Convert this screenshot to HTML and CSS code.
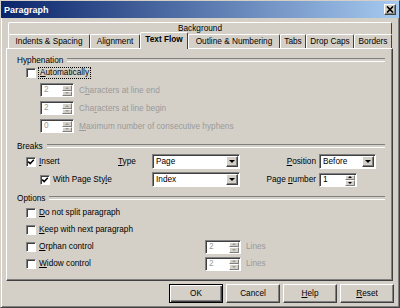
FILE: index.html
```html
<!DOCTYPE html>
<html lang="en">
<head>
<meta charset="UTF-8" />
<meta name="viewport" content="width=device-width,initial-scale=1.0" />
<title>Paragraph</title>
<link rel="stylesheet" href="styles.css">
</head>
<body>
<div class="window">
  <div class="titlebar">
    <span class="title">Paragraph</span>
    <span class="close"><svg width="8" height="7" viewBox="0 0 8 7"><path d="M1 0.5L7 6.5M7 0.5L1 6.5" stroke="#000" stroke-width="1.7"/></svg></span>
  </div>

  <div class="tabs-back"><div>Background</div></div>
  <div class="tabs">
    <div class="tab w-indents">Indents &amp; Spacing</div>
    <div class="tab w-align">Alignment</div>
    <div class="tab active w-flow">Text Flow</div>
    <div class="tab w-outline">Outline &amp; Numbering</div>
    <div class="tab w-tabs">Tabs</div>
    <div class="tab w-caps">Drop Caps</div>
    <div class="tab w-borders">Borders</div>
  </div>

  <div class="panel">
    <!-- Hyphenation -->
    <div class="group g-hyph"><span>Hyphenation</span></div>
    <div class="row chk-row">
      <span class="check"></span>
      <span class="focus"><u>A</u>utomatically</span>
    </div>
    <div class="row spin-row">
      <span class="spin off"><span class="val">2</span><span class="arrows"><i class="up"></i><i class="down"></i></span></span>
      <span class="dim">C<u>h</u>aracters at line end</span>
    </div>
    <div class="row spin-row">
      <span class="spin off"><span class="val">2</span><span class="arrows"><i class="up"></i><i class="down"></i></span></span>
      <span class="dim">Cha<u>r</u>acters at line begin</span>
    </div>
    <div class="row spin-row">
      <span class="spin off"><span class="val">0</span><span class="arrows"><i class="up"></i><i class="down"></i></span></span>
      <span class="dim"><u>M</u>aximum number of consecutive hyphens</span>
    </div>

    <!-- Breaks -->
    <div class="group g-breaks"><span>Breaks</span></div>
    <div class="row brk-row first">
      <span class="cell1"><span class="check on"><svg width="8" height="8" viewBox="0 0 8 8"><path d="M1.2 3.6L3.2 5.6L6.8 1.8" fill="none" stroke="#000" stroke-width="1.5"/></svg></span><span><u>I</u>nsert</span></span>
      <span class="cell-type"><u>T</u>ype</span>
      <span class="select wide"><span class="val">Page</span><span class="drop"><i></i></span></span>
      <span class="cell-r"><u>P</u>osition</span>
      <span class="select narrow"><span class="val">Before</span><span class="drop"><i></i></span></span>
    </div>
    <div class="row brk-row">
      <span class="cell1 indent"><span class="check on"><svg width="8" height="8" viewBox="0 0 8 8"><path d="M1.2 3.6L3.2 5.6L6.8 1.8" fill="none" stroke="#000" stroke-width="1.5"/></svg></span><span>With Page Sty<u>l</u>e</span></span>
      <span class="cell-type"></span>
      <span class="select wide"><span class="val">Index</span><span class="drop"><i></i></span></span>
      <span class="cell-r">Page <u>n</u>umber</span>
      <span class="spin num"><span class="val">1</span><span class="arrows"><i class="up"></i><i class="down"></i></span></span>
    </div>

    <!-- Options -->
    <div class="group g-opts"><span>Options</span></div>
    <div class="row opt-row">
      <span class="optcell"><span class="check"></span><span><u>D</u>o not split paragraph</span></span>
    </div>
    <div class="row opt-row">
      <span class="optcell"><span class="check"></span><span><u>K</u>eep with next paragraph</span></span>
    </div>
    <div class="row opt-row">
      <span class="optcell"><span class="check"></span><span><u>O</u>rphan control</span></span>
      <span class="spin off lines"><span class="val">2</span><span class="arrows"><i class="up"></i><i class="down"></i></span></span>
      <span class="dim">Lines</span>
    </div>
    <div class="row opt-row">
      <span class="optcell"><span class="check"></span><span><u>W</u>idow control</span></span>
      <span class="spin off lines"><span class="val">2</span><span class="arrows"><i class="up"></i><i class="down"></i></span></span>
      <span class="dim">Lines</span>
    </div>
  </div>

  <div class="buttons">
    <span class="btn default">OK</span>
    <span class="btn">Cancel</span>
    <span class="btn"><u>H</u>elp</span>
    <span class="btn"><u>R</u>eset</span>
  </div>
</div>
</body>
</html>
```

FILE: styles.css
```css
* { box-sizing: border-box; }
body { margin: 0; background: #d4d0c8; font-family: "Liberation Sans", Arial, sans-serif; font-size: 8.25px; color: #000; }
u { text-decoration-thickness: 1px; text-underline-offset: 1px; }

.window { width: 400px; height: 308px; border: 1px solid; border-color: #d4d0c8 #404040 #404040 #d4d0c8; box-shadow: inset 1px 1px 0 #fff, inset -1px -1px 0 #808080; }

/* title bar */
.titlebar { height: 17px; display: flex; align-items: center; justify-content: space-between; padding: 0 3px; background: linear-gradient(to right, #0a246a, #a6caf0); }
.title { color: #fff; font-weight: bold; font-size: 9px; }
.close { width: 12px; height: 11px; display: flex; align-items: center; justify-content: center; background: #d4d0c8; border: 1px solid; border-color: #fff #404040 #404040 #fff; box-shadow: inset -1px -1px 0 #808080; }

/* tabs */
.tabs-back { margin: 4px 0 0 7px; width: 384px; height: 12px; border-top: 1px solid #fff; border-left: 1px solid #fff; border-right: 1px solid #404040; border-radius: 2px 2px 0 0; text-align: center; line-height: 12px; }
.tabs { display: flex; align-items: flex-end; margin-left: 7px; height: 14px; }
.tab { height: 14px; border-top: 1px solid #fff; border-left: 1px solid #fff; border-right: 1px solid #404040; border-radius: 2px 2px 0 0; text-align: center; line-height: 13px; white-space: nowrap; }
.tab.active { position: relative; z-index: 1; height: 17px; margin-bottom: -1px; line-height: 14px; font-weight: bold; background: #d4d0c8; }
.w-indents { width: 82px; }
.w-align { width: 50px; }
.w-flow { width: 48px; }
.w-outline { width: 92px; }
.w-tabs { width: 26px; }
.w-caps { width: 48px; }
.w-borders { width: 38px; }

/* panel */
.panel { margin-left: 5px; width: 387px; height: 233px; border: 1px solid; border-color: #fff #404040 #404040 #fff; box-shadow: inset -1px -1px 0 #808080; }
.group { display: flex; align-items: center; gap: 4px; height: 12px; margin: 0 7px 0 10px; }
.group::after { content: ""; flex: 1; height: 2px; border-top: 1px solid #808080; border-bottom: 1px solid #fff; }
.g-hyph { margin-top: 5px; }
.g-breaks { margin-top: 7px; }
.g-opts { margin-top: 5px; }

.row { display: flex; align-items: center; white-space: nowrap; }
.chk-row { height: 12px; margin: 1px 0 0 19px; gap: 3px; }
.spin-row { height: 14px; margin: 4px 0 0 33px; gap: 5px; }
.brk-row { height: 15px; margin: 3px 0 0 19px; }
.brk-row.first { margin-top: 2px; }
.opt-row { height: 17px; margin-left: 19px; }

.dim { color: #9a9a9a; }
.focus { outline: 1px dotted #000; padding: 0 1px; line-height: 10px; }

.check { width: 10px; height: 10px; flex: none; display: flex; align-items: center; justify-content: center; background: #fff; border: 1px solid; border-color: #808080 #fff #fff #808080; box-shadow: inset 1px 1px 0 #404040; }

.cell1 { width: 92px; display: flex; align-items: center; gap: 3px; }
.cell1.indent { padding-left: 14px; }
.cell-type { width: 34px; }
.cell-r { width: 79px; text-align: right; padding-right: 3px; }
.optcell { width: 179px; display: flex; align-items: center; gap: 3px; }

/* spin fields and list boxes */
.spin, .select { display: flex; background: #fff; border: 1px solid; border-color: #808080 #fff #fff #808080; box-shadow: inset 1px 1px 0 #404040; }
.spin { width: 34px; height: 14px; }
.spin.num { width: 38px; }
.spin.lines { width: 36px; margin-right: 5px; }
.spin .val, .select .val { flex: 1; padding-left: 3px; line-height: 12px; }
.spin.off .val { color: #9a9a9a; }
.arrows { width: 11px; display: flex; flex-direction: column; padding: 1px 1px 0 0; }
.arrows i { flex: 1; display: flex; align-items: center; justify-content: center; background: #d4d0c8; border: 1px solid; border-color: #fff #808080 #808080 #fff; }
.arrows i::before { content: ""; width: 0; height: 0; border-left: 2px solid transparent; border-right: 2px solid transparent; }
.arrows .up::before { border-bottom: 2px solid #000; }
.arrows .down::before { border-top: 2px solid #000; }
.spin.off .arrows i::before { border-bottom-color: #9a9a9a; border-top-color: #9a9a9a; }

.select { height: 15px; }
.select.wide { width: 88px; }
.select.narrow { width: 57px; }
.select .val { line-height: 13px; }
.drop { width: 12px; margin: 1px 1px 1px 0; display: flex; align-items: center; justify-content: center; background: #d4d0c8; border: 1px solid; border-color: #fff #404040 #404040 #fff; box-shadow: inset -1px -1px 0 #808080; }
.drop i { width: 0; height: 0; border-left: 3px solid transparent; border-right: 3px solid transparent; border-top: 3px solid #000; }

/* buttons */
.buttons { display: flex; justify-content: flex-end; gap: 3px; margin-top: 3px; padding-right: 5px; }
.btn { width: 54px; height: 19px; display: flex; align-items: center; justify-content: center; border: 1px solid; border-color: #fff #404040 #404040 #fff; box-shadow: inset -1px -1px 0 #808080; }
.btn.default { border-color: #000; box-shadow: inset 1px 1px 0 #fff, inset -1px -1px 0 #404040, inset -2px -2px 0 #808080; }
```
